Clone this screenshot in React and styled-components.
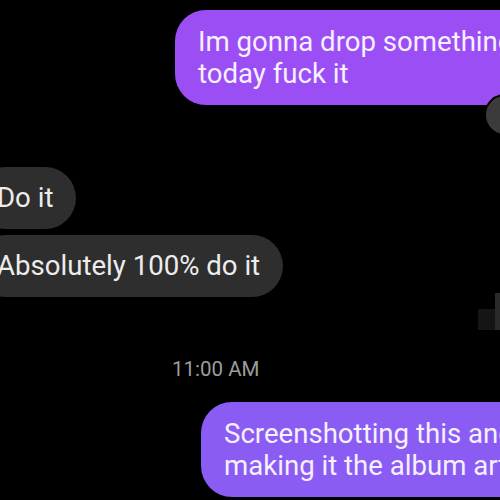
import styled, { createGlobalStyle } from "styled-components"

const Global = createGlobalStyle`
    html, body {
        margin: 0;
        padding: 0;
        background: #000000;
    }
`

export default function App() {
    return (
        <Screen>
            <Global />
            <Row $indent="175px">
                <Bubble $mine $tone="#9c4ef5">
                    Im gonna drop something<br />today fuck it
                </Bubble>
                <Reaction />
            </Row>

            <Group>
                <Row $indent="-26px">
                    <Bubble>Do it</Bubble>
                </Row>
                <Row $indent="-26px">
                    <Bubble>Absolutely 100% do it</Bubble>
                </Row>
                <Scroll>
                    <ScrollThumb />
                    <ScrollBlock />
                </Scroll>
            </Group>

            <Time>11:00 AM</Time>

            <Row $indent="201px">
                <Bubble $mine $tone="#8a5cf4">
                    Screenshotting this and<br />making it the album art
                </Bubble>
            </Row>
        </Screen>
    )
}

const Screen = styled.div`
    width: 500px;
    height: 500px;
    overflow: hidden;
    background: #000000;
    display: flex;
    flex-direction: column;
    padding-top: 10px;
    box-sizing: border-box;
    font-family: 'Roboto', 'Liberation Sans', sans-serif;
`
const Row = styled.div`
    position: relative;
    display: flex;
    margin-left: ${p => p.$indent};
`
const Bubble = styled.div`
    white-space: nowrap;
    background: ${p => (p.$mine ? p.$tone : "#2e2e2e")};
    color: ${p => (p.$mine ? "#f6f0ff" : "#ececec")};
    font-size: 27.6px;
    line-height: 32px;
    padding: ${p => (p.$mine ? "16px 60px 15px 23px" : "15px 23px 15px 23px")};
    border-radius: 31px;
    ${p => p.$mine && "border-top-right-radius: 6px; border-bottom-right-radius: 6px;"}
`
const Reaction = styled.div`
    position: absolute;
    left: 309px;
    top: 84px;
    width: 42px;
    height: 42px;
    border-radius: 50%;
    background: #3b3b3b;
    border: 2px solid #000000;
    box-sizing: border-box;
`
const Group = styled.div`
    position: relative;
    display: flex;
    flex-direction: column;
    gap: 6px;
    margin-top: 62px;
`
const Scroll = styled.div`
    position: absolute;
    right: 0;
    top: 126px;
    width: 22px;
    height: 37px;
`
const ScrollThumb = styled.div`
    position: absolute;
    right: 0;
    top: 0;
    width: 5px;
    height: 37px;
    background: #2a2a2a;
`
const ScrollBlock = styled.div`
    position: absolute;
    right: 5px;
    top: 16px;
    width: 17px;
    height: 21px;
    background: #151515;
`
const Time = styled.div`
    margin: 60px 0 21px 172px;
    color: #9c9c9c;
    font-size: 20.5px;
    line-height: 24px;
`
